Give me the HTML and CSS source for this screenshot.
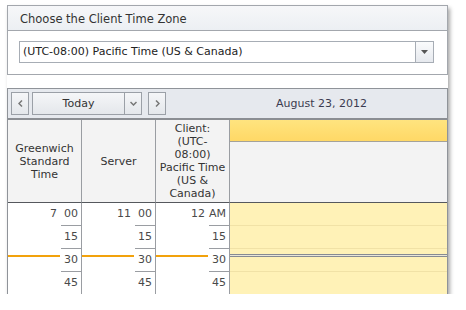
FILE: index.html
```html
<!DOCTYPE html>
<html lang="en">
<head>
  <meta charset="UTF-8">
  <title>Client Time Zone</title>
  <link rel="stylesheet" href="styles.css">
</head>
<body>

  <div class="frame">

    <!-- TIME ZONE PANEL -->
    <div class="tz-panel">
      <div class="tz-head">Choose the Client Time Zone</div>
      <div class="tz-body">
        <div class="combo">
          <span class="combo-text">(UTC-08:00) Pacific Time (US &amp; Canada)</span>
          <span class="combo-btn">
            <svg width="7" height="4" viewBox="0 0 7 4"><path d="M0 0h7L3.5 4z" fill="#555"/></svg>
          </span>
        </div>
      </div>
    </div>

    <!-- SCHEDULER -->
    <div class="scheduler">
      <div class="nav">
        <span class="nav-btn">
          <svg width="5" height="7" viewBox="0 0 5 7"><path d="M4 0.5L1 3.5L4 6.5" fill="none" stroke="#777" stroke-width="1.5"/></svg>
        </span>
        <div class="today">
          <span class="today-text">Today</span>
          <span class="today-btn">
            <svg width="7" height="5" viewBox="0 0 7 5"><path d="M0.5 1L3.5 4L6.5 1" fill="none" stroke="#777" stroke-width="1.5"/></svg>
          </span>
        </div>
        <span class="nav-btn">
          <svg width="5" height="7" viewBox="0 0 5 7"><path d="M1 0.5L4 3.5L1 6.5" fill="none" stroke="#777" stroke-width="1.5"/></svg>
        </span>
        <div class="date">August 23, 2012</div>
      </div>

      <div class="grid">
        <div class="zone-head">Greenwich Standard Time</div>
        <div class="zone-head">Server</div>
        <div class="zone-head">Client: (UTC-<br>08:00) Pacific Time (US &amp; Canada)</div>
        <div class="day-head">
          <div class="all-day"></div>
          <div class="day-blank"></div>
        </div>

        <div class="ruler">
          <div class="row"><span class="hour">7</span><span class="min">00</span></div>
          <div class="row"><span class="hour"></span><span class="min">15</span></div>
          <div class="row"><span class="hour"></span><span class="min">30</span></div>
          <div class="row"><span class="hour"></span><span class="min">45</span></div>
          <div class="now"></div>
        </div>
        <div class="ruler">
          <div class="row"><span class="hour">11</span><span class="min">00</span></div>
          <div class="row"><span class="hour"></span><span class="min">15</span></div>
          <div class="row"><span class="hour"></span><span class="min">30</span></div>
          <div class="row"><span class="hour"></span><span class="min">45</span></div>
          <div class="now"></div>
        </div>
        <div class="ruler">
          <div class="row"><span class="hour">12</span><span class="min">AM</span></div>
          <div class="row"><span class="hour"></span><span class="min">15</span></div>
          <div class="row"><span class="hour"></span><span class="min">30</span></div>
          <div class="row"><span class="hour"></span><span class="min">45</span></div>
          <div class="now"></div>
        </div>
        <div class="day-body">
          <div class="cell"></div>
          <div class="cell"></div>
          <div class="cell"></div>
          <div class="cell"></div>
          <div class="day-now"></div>
        </div>
      </div>
    </div>

  </div>

</body>
</html>
```

FILE: styles.css
```css
body {
  margin: 0;
  background-color: #fff;
  font-family: "DejaVu Sans", Verdana, sans-serif;
  font-size: 11px;
  color: #333;
}

.frame {
  margin: 5px 0 0 7px;
  width: 441px;
  height: 289px;
  overflow: hidden;
  position: relative;
  box-shadow: 2px 3px 4px rgba(0, 0, 0, 0.35);
}

/* time zone panel */

.tz-panel {
  border: 1px solid #a3a7ad;
  background-color: #fff;
}

.tz-head {
  height: 23px;
  padding-top: 1px;
  line-height: 24px;
  padding-left: 12px;
  font-size: 11.5px;
  background: linear-gradient(#f6f7f9, #eceff3);
  border-bottom: 1px solid #a3a7ad;
}

.tz-body {
  padding: 10px 13px 11px 11px;
}

.combo {
  display: flex;
  height: 22px;
  border: 1px solid #a7adb5;
  box-sizing: border-box;
}

.combo-text {
  flex: 1;
  line-height: 20px;
  padding-left: 3px;
  color: #222;
}

.combo-btn {
  width: 17px;
  display: flex;
  align-items: center;
  justify-content: center;
  border-left: 1px solid #a7adb5;
  background: linear-gradient(#fafbfc, #e6e9ee);
}

/* scheduler */

.scheduler {
  margin-top: 13px;
  border: 1px solid #8f9399;
  border-bottom: none;
}

.nav {
  display: flex;
  align-items: center;
  height: 29px;
  padding-left: 3px;
  background-color: #e6e9ee;
  border-bottom: 2px solid #8b8e93;
}

.nav-btn {
  width: 16px;
  height: 21px;
  display: flex;
  align-items: center;
  justify-content: center;
  border: 1px solid #9ba0a7;
  background: linear-gradient(#f5f6f8, #e4e7eb);
}

.today {
  display: flex;
  width: 110px;
  height: 23px;
  box-sizing: border-box;
  margin: 0 6px 0 3px;
  border: 1px solid #9ba0a7;
  background: linear-gradient(#f5f6f8, #e4e7eb);
}

.today-text {
  flex: 1;
  text-align: center;
  line-height: 21px;
}

.today-btn {
  width: 16px;
  display: flex;
  align-items: center;
  justify-content: center;
  border-left: 1px solid #9ba0a7;
}

.date {
  flex: 1;
  text-align: center;
  padding-left: 30px;
  color: #3b3b50;
}

.grid {
  display: grid;
  grid-template-columns: 74px 74px 74px 1fr;
}

.zone-head {
  height: 82px;
  display: flex;
  align-items: center;
  justify-content: center;
  text-align: center;
  line-height: 13px;
  padding: 0 2px;
  background-color: #f3f3f3;
  border-right: 1px solid #9a9da2;
  border-bottom: 1px solid #55585d;
}

.day-head {
  border-bottom: 1px solid #55585d;
  display: flex;
  flex-direction: column;
}

.all-day {
  height: 21px;
  background: linear-gradient(#ffe47f, #ffd866);
  border-bottom: 1px solid #a4a29a;
}

.day-blank {
  flex: 1;
  background-color: #f3f3f3;
}

.ruler {
  position: relative;
  border-right: 1px solid #9a9da2;
  background-color: #fff;
}

.row {
  display: flex;
  height: 23px;
  color: #4a4a4a;
}

.hour {
  flex: 1;
  text-align: right;
  padding-right: 4px;
  line-height: 22px;
}

.min {
  width: 20px;
  box-sizing: border-box;
  text-align: right;
  padding-right: 3px;
  line-height: 22px;
  border-bottom: 1px solid #9a9da2;
}

.now {
  position: absolute;
  top: 52px;
  left: 0;
  right: 21px;
  height: 2px;
  background-color: #f2a20c;
}

.day-body {
  position: relative;
  background-color: #fff2b7;
}

.cell {
  height: 23px;
  box-sizing: border-box;
  border-bottom: 1px solid #f1e2a6;
}

.day-now {
  position: absolute;
  top: 51px;
  left: 0;
  right: 0;
  height: 1px;
  border-top: 1px solid #878b92;
  border-bottom: 1px solid #878b92;
  background-color: #e9e6d8;
}
```
